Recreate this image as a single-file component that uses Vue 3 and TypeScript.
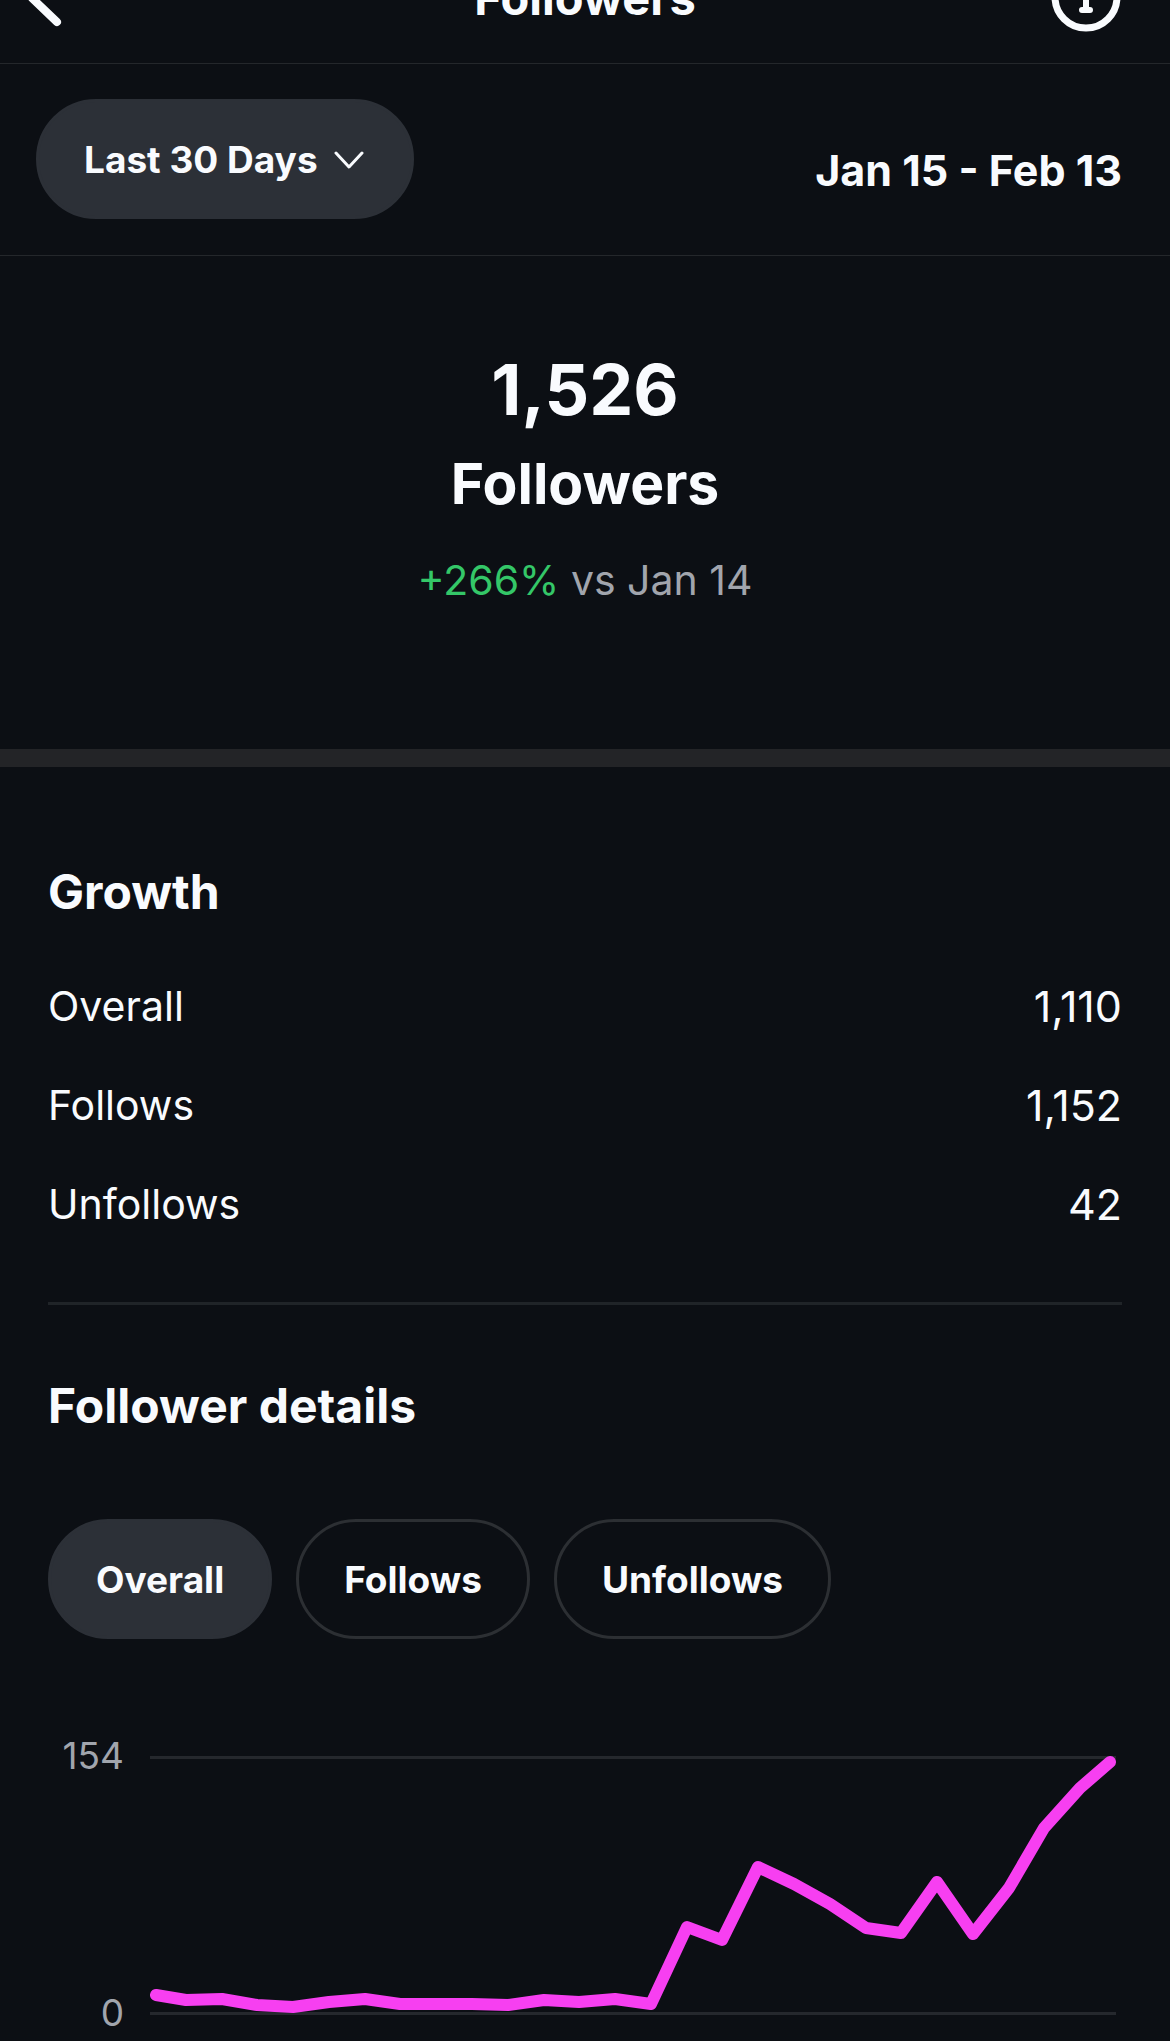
<script setup lang="ts">
import { computed, ref } from 'vue'

type Metric = 'Overall' | 'Follows' | 'Unfollows'

interface GrowthRow {
  label: Metric
  value: string
}

const growth: GrowthRow[] = [
  { label: 'Overall', value: '1,110' },
  { label: 'Follows', value: '1,152' },
  { label: 'Unfollows', value: '42' },
]

const selected = ref<Metric>('Overall')

// Height of each daily point below the top grid line, in chart units.
const daily: number[] = [
  239, 244, 243, 249, 251, 246, 243, 248, 248, 248, 249, 244, 246, 243, 248,
  171, 184, 111, 128, 148, 172, 177, 126, 178, 132, 72, 32, 6,
]

const chartWidth = 966
const inset = 6

const points = computed(() =>
  daily
    .map((y, i) => {
      const x = Math.round((i * chartWidth) / (daily.length - 1))
      return `${Math.min(chartWidth - inset, Math.max(inset, x))},${y}`
    })
    .join(' '),
)
</script>

<template>
  <div class="page">
    <header class="topbar">
      <button class="icon-button" type="button" aria-label="Back">
        <svg class="back" viewBox="0 0 56 60" fill="none" aria-hidden="true">
          <path d="M30 54 5 30 30 6" stroke="currentColor" stroke-width="8" stroke-linecap="round" stroke-linejoin="round" />
        </svg>
      </button>
      <h1 class="title">Followers</h1>
      <button class="icon-button end" type="button" aria-label="Information">
        <svg class="info" viewBox="0 0 72 72" fill="none" aria-hidden="true">
          <circle cx="36" cy="35" r="31" stroke="currentColor" stroke-width="7" />
          <path d="M31 35h5v13M32 48h8" stroke="currentColor" stroke-width="6" stroke-linecap="round" stroke-linejoin="round" />
          <circle cx="36" cy="22" r="4" fill="currentColor" />
        </svg>
      </button>
    </header>

    <section class="range">
      <button class="pill filled" type="button">
        Last 30 Days
        <svg class="caret" viewBox="0 0 32 18" fill="none" aria-hidden="true">
          <path d="M2 2l13 14L28 2" stroke="currentColor" stroke-width="3" stroke-linecap="round" stroke-linejoin="round" />
        </svg>
      </button>
      <p class="dates">Jan 15 - Feb 13</p>
    </section>

    <section class="summary">
      <p class="total">1,526</p>
      <h2 class="total-label">Followers</h2>
      <p class="change"><span class="up">+266%</span> vs Jan 14</p>
    </section>

    <main class="body">
      <section class="growth">
        <h3 class="heading">Growth</h3>
        <dl class="rows">
          <div v-for="row in growth" :key="row.label" class="row">
            <dt>{{ row.label }}</dt>
            <dd>{{ row.value }}</dd>
          </div>
        </dl>
      </section>

      <section class="details">
        <h3 class="heading">Follower details</h3>
        <div class="tabs">
          <button
            v-for="row in growth"
            :key="row.label"
            class="pill"
            :class="{ filled: selected === row.label }"
            type="button"
            :aria-pressed="selected === row.label"
            @click="selected = row.label"
          >
            {{ row.label }}
          </button>
        </div>

        <div class="chart">
          <div class="axis">
            <span>154</span>
            <span>0</span>
          </div>
          <svg class="plot" viewBox="0 0 966 259" fill="none" role="img" aria-label="Daily followers">
            <path class="grid" d="M0 1.5h966M0 257.5h966" />
            <polyline class="line" :points="points" />
          </svg>
        </div>
      </section>
    </main>
  </div>
</template>

<style>
body {
  margin: 0;
  background: #0c0f14;
}
</style>

<style scoped>
.page {
  display: flex;
  flex-direction: column;
  overflow: hidden;
  background: #0c0f14;
  color: #f9fbfe;
  font-family: Inter, "Liberation Sans", sans-serif;
}

h1,
h2,
h3,
p,
dl,
dd {
  margin: 0;
}

button {
  margin: 0;
  font: inherit;
  color: inherit;
  cursor: pointer;
}

/* The bar is scrolled partly out of view. */
.topbar {
  display: grid;
  grid-template-columns: 1fr auto 1fr;
  align-items: center;
  box-sizing: border-box;
  height: 132px;
  margin-top: -68px;
  padding: 0 48px;
  border-bottom: 1px solid #24272b;
}

.icon-button {
  display: flex;
  padding: 0;
  border: 0;
  background: none;
}

.end {
  justify-self: end;
}

.back {
  width: 56px;
  height: 60px;
  margin-left: -21px;
}

.info {
  width: 72px;
  height: 72px;
}

.title {
  font-size: 47px;
  line-height: 56px;
  font-weight: 700;
}

.range {
  display: flex;
  justify-content: space-between;
  align-items: center;
  padding: 35px 48px 36px 36px;
  border-bottom: 1px solid #24272b;
}

.pill {
  display: flex;
  align-items: center;
  gap: 16px;
  box-sizing: border-box;
  height: 120px;
  padding: 2px 45px 0;
  border: 3px solid #2c2f33;
  border-radius: 60px;
  background: none;
  font-size: 37px;
  line-height: 44px;
  font-weight: 700;
}

.pill.filled {
  border-color: #2c3037;
  background: #2c3037;
}

.caret {
  width: 32px;
  height: 18px;
}

.dates {
  padding-top: 22px;
  font-size: 43px;
  line-height: 52px;
  font-weight: 700;
}

.summary {
  padding: 94px 48px 143px;
  border-bottom: 18px solid #232427;
  text-align: center;
}

.total {
  font-size: 70px;
  line-height: 80px;
  font-weight: 700;
}

.total-label {
  margin-top: 18px;
  font-size: 57px;
  line-height: 72px;
  font-weight: 700;
}

.change {
  margin-top: 34px;
  font-size: 41px;
  line-height: 52px;
  color: #a1a5ad;
}

.up {
  color: #34c768;
}

.body {
  padding: 0 48px;
}

.growth {
  padding: 95px 0 72px;
  border-bottom: 3px solid #202428;
}

.heading {
  font-size: 48px;
  line-height: 60px;
  font-weight: 700;
}

.rows {
  display: flex;
  flex-direction: column;
  gap: 47px;
  margin-top: 58px;
}

.row {
  display: flex;
  justify-content: space-between;
  font-size: 41px;
  line-height: 52px;
}

.row dd {
  font-size: 43px;
}

.details {
  padding-top: 71px;
}

.tabs {
  display: flex;
  gap: 24px;
  margin-top: 83px;
}

.chart {
  display: flex;
  gap: 26px;
  margin: 95px 6px 6px 0;
}

.axis {
  display: flex;
  flex-direction: column;
  justify-content: space-between;
  flex: none;
  width: 76px;
  font-size: 37px;
  line-height: 44px;
  text-align: right;
  color: #a1a5ad;
}

.plot {
  flex: 1;
  min-width: 0;
  margin: 22px 0 20px;
}

.grid {
  stroke: #25282d;
  stroke-width: 3;
}

.line {
  stroke: #f73ff1;
  stroke-width: 12;
  stroke-linecap: round;
  stroke-linejoin: round;
}
</style>
